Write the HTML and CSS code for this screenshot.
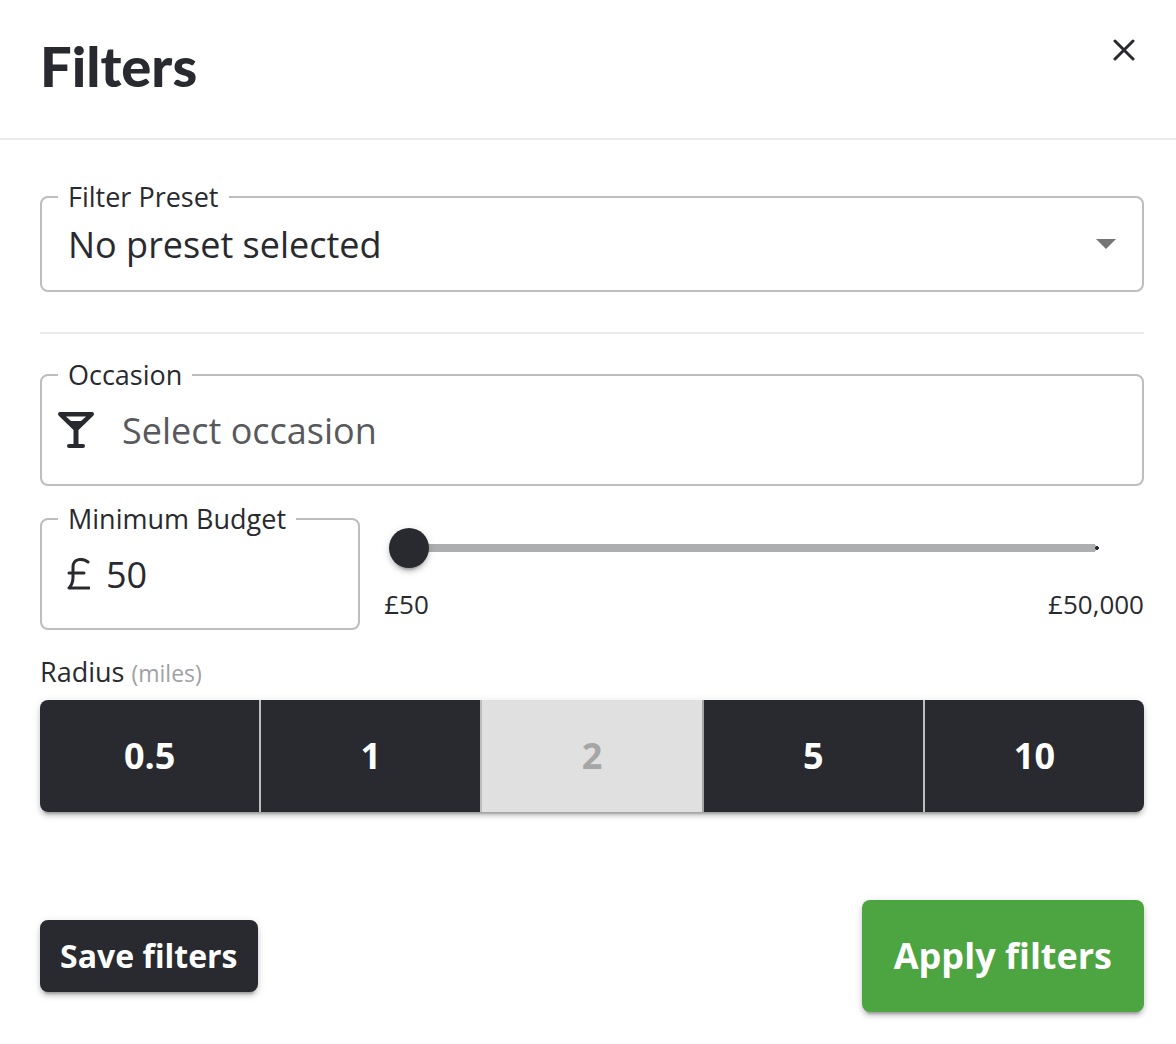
FILE: index.html
```
<!DOCTYPE html>
<html lang="en">
<head>
    <meta charset="UTF-8">
    <meta name="viewport" content="width=device-width, initial-scale=1.0">
    <title>Filters</title>
    <link rel="stylesheet" href="styles.css">
</head>
<body>

    <header class="header">
        <h1>Filters</h1>
        <button type="button" class="close" aria-label="Close">
            <svg width="22" height="22" viewBox="0 0 22 22" fill="none" stroke="currentColor" stroke-width="3" stroke-linecap="round">
                <path d="M2 2L20 20M20 2L2 20"/>
            </svg>
        </button>
    </header>

    <form class="filters">
        <fieldset class="field">
            <legend><label for="preset">Filter Preset</label></legend>
            <div class="select-wrap">
                <select id="preset">
                    <option>No preset selected</option>
                </select>
                <svg class="arrow" width="20" height="10" viewBox="0 0 20 10"><path d="M0 0H20L10 10Z" fill="#757575"/></svg>
            </div>
        </fieldset>

        <hr>

        <fieldset class="field occasion">
            <legend><label for="occasion">Occasion</label></legend>
            <div class="input-row">
                <svg width="36" height="36" viewBox="0 0 36 36" fill="currentColor">
                    <path fill-rule="evenodd" d="M2 0H34Q36 0 36 2Q36 3 35 4L20.5 18V32H25Q27 32 27 34Q27 36 25 36H11Q9 36 9 34Q9 32 11 32H15.5V18L1 4Q0 3 0 2Q0 0 2 0ZM8 4.500L13 9H23L28 4.500Z"/>
                </svg>
                <input type="text" id="occasion" placeholder="Select occasion">
            </div>
        </fieldset>

        <div class="budget-row">
            <fieldset class="field budget">
                <legend><label for="budget">Minimum Budget</label></legend>
                <div class="input-row">
                    <svg width="24" height="32" viewBox="0 0 24 32" fill="none" stroke="currentColor" stroke-width="3" stroke-linecap="round" stroke-linejoin="round">
                        <path d="M22 4C17 0 7 0 7 9V19C7 24 6 27 3 30H23M3 15H18"/>
                    </svg>
                    <input type="text" id="budget" inputmode="numeric" value="50">
                </div>
            </fieldset>
            <div class="slider">
                <input type="range" min="50" max="50000" value="50" aria-label="Minimum budget">
                <div class="marks">
                    <span>£50</span>
                    <span>£50,000</span>
                </div>
            </div>
        </div>

        <div class="radius-label" id="radiusLabel">Radius <small>(miles)</small></div>
        <div class="radius" role="group" aria-labelledby="radiusLabel">
            <button type="button">0.5</button>
            <button type="button">1</button>
            <button type="button" disabled>2</button>
            <button type="button">5</button>
            <button type="button">10</button>
        </div>

        <div class="actions">
            <button type="button" class="save">Save filters</button>
            <button type="submit" class="apply">Apply filters</button>
        </div>
    </form>

</body>
</html>
```
FILE: styles.css
```
* {
    box-sizing: border-box;
}
body {
    margin: 0;
    background: #fff;
    color: #292a2f;
    font-family: "Open Sans", "Noto Sans", sans-serif;
    font-size: 36px;
}
button, input, select {
    font: inherit;
    color: inherit;
    border: 0;
    margin: 0;
    padding: 0;
    background: none;
}
button {
    cursor: pointer;
}

/* Header */
.header {
    display: flex;
    justify-content: space-between;
    align-items: flex-start;
    padding: 26px 32px 32px 40px;
    border-bottom: 2px solid #ebebef;
}
h1 {
    margin: 0;
    font-family: Lato, sans-serif;
    font-weight: 900;
    font-size: 56px;
    line-height: 80px;
}
.close {
    display: flex;
    padding: 13px 9px;
}

/* Outlined fields */
.filters {
    padding: 41px 32px 32px 40px;
}
.field {
    min-width: 0;
    margin: 0;
    padding: 0 16px 15px;
    border: 2px solid #bdbdbd;
    border-radius: 8px;
}
legend {
    padding: 0 10px;
    font-size: 27px;
    line-height: 32px;
}
legend label {
    display: block;
}
hr {
    height: 2px;
    margin: 40px 0 25px;
    border: 0;
    background: #ebebef;
}
.select-wrap {
    display: flex;
    align-items: center;
    padding: 0 10px;
}
select {
    flex: 1;
    height: 62px;
    appearance: none;
}
.arrow {
    margin-left: -20px;
    pointer-events: none;
}
.input-row {
    display: flex;
    align-items: center;
    height: 78px;
}
.input-row input {
    flex: 1;
    min-width: 0;
    height: 64px;
}
.occasion .input-row {
    gap: 28px;
}
.occasion input::placeholder {
    color: #58595d;
    opacity: 1;
}

/* Budget */
.budget-row {
    display: flex;
    gap: 24px;
    margin-top: 17px;
}
.budget {
    flex: 0 0 29%;
}
.budget .input-row {
    gap: 16px;
    padding: 0 8px;
}
.slider {
    flex: 1;
    padding-top: 25px;
}
.slider input {
    display: block;
    appearance: none;
    width: calc(100% - 32px);
    height: 40px;
    margin-left: 5px;
    background:
        radial-gradient(circle, #292a2f 2px, transparent 2px) right 18px center / 4px 4px no-repeat,
        radial-gradient(circle, #adaeb0 4px, transparent 4px) right 20px center / 8px 8px no-repeat,
        linear-gradient(#adaeb0, #adaeb0) left 20px center / calc(100% - 44px) 8px no-repeat;
}
.slider input::-webkit-slider-thumb {
    appearance: none;
    width: 40px;
    height: 40px;
    border-radius: 50%;
    background: #292a2f;
    box-shadow: 0 6px 2px -4px rgba(0, 0, 0, 0.2), 0 4px 4px rgba(0, 0, 0, 0.14), 0 2px 10px rgba(0, 0, 0, 0.12);
}
.marks {
    display: flex;
    justify-content: space-between;
    margin-top: 20px;
    font-size: 26px;
    line-height: 32px;
}

/* Radius */
.radius-label {
    margin-top: 24px;
    font-size: 27px;
    line-height: 36px;
}
.radius-label small {
    color: #a0a1a4;
    font-size: 23px;
}
.radius {
    display: flex;
    margin-top: 9px;
    border-radius: 8px;
}
.radius, .save, .apply {
    box-shadow: 0 6px 2px -4px rgba(0, 0, 0, 0.2), 0 4px 4px rgba(0, 0, 0, 0.14), 0 2px 10px rgba(0, 0, 0, 0.12);
}
.radius button, .save, .apply {
    background: #292a2f;
    color: #fff;
    font-weight: 700;
}
.radius button {
    flex: 1;
    height: 112px;
    padding-bottom: 2px;
    border-right: 2px solid #bdbdbd;
}
.radius button:first-child {
    border-radius: 8px 0 0 8px;
}
.radius button:last-child {
    border-right: 0;
    border-radius: 0 8px 8px 0;
}
.radius button:disabled {
    background: #e0e0e0;
    border-color: #a6a6a6;
    color: #a6a6a6;
    cursor: default;
}

/* Actions */
.actions {
    display: flex;
    justify-content: space-between;
    align-items: center;
    margin-top: 88px;
}
.save, .apply {
    padding: 0 20px 2px;
    border-radius: 8px;
}
.save {
    height: 72px;
    font-size: 32px;
}
.apply {
    height: 112px;
    padding: 0 32px 2px;
    background: #4ca540;
}
```
